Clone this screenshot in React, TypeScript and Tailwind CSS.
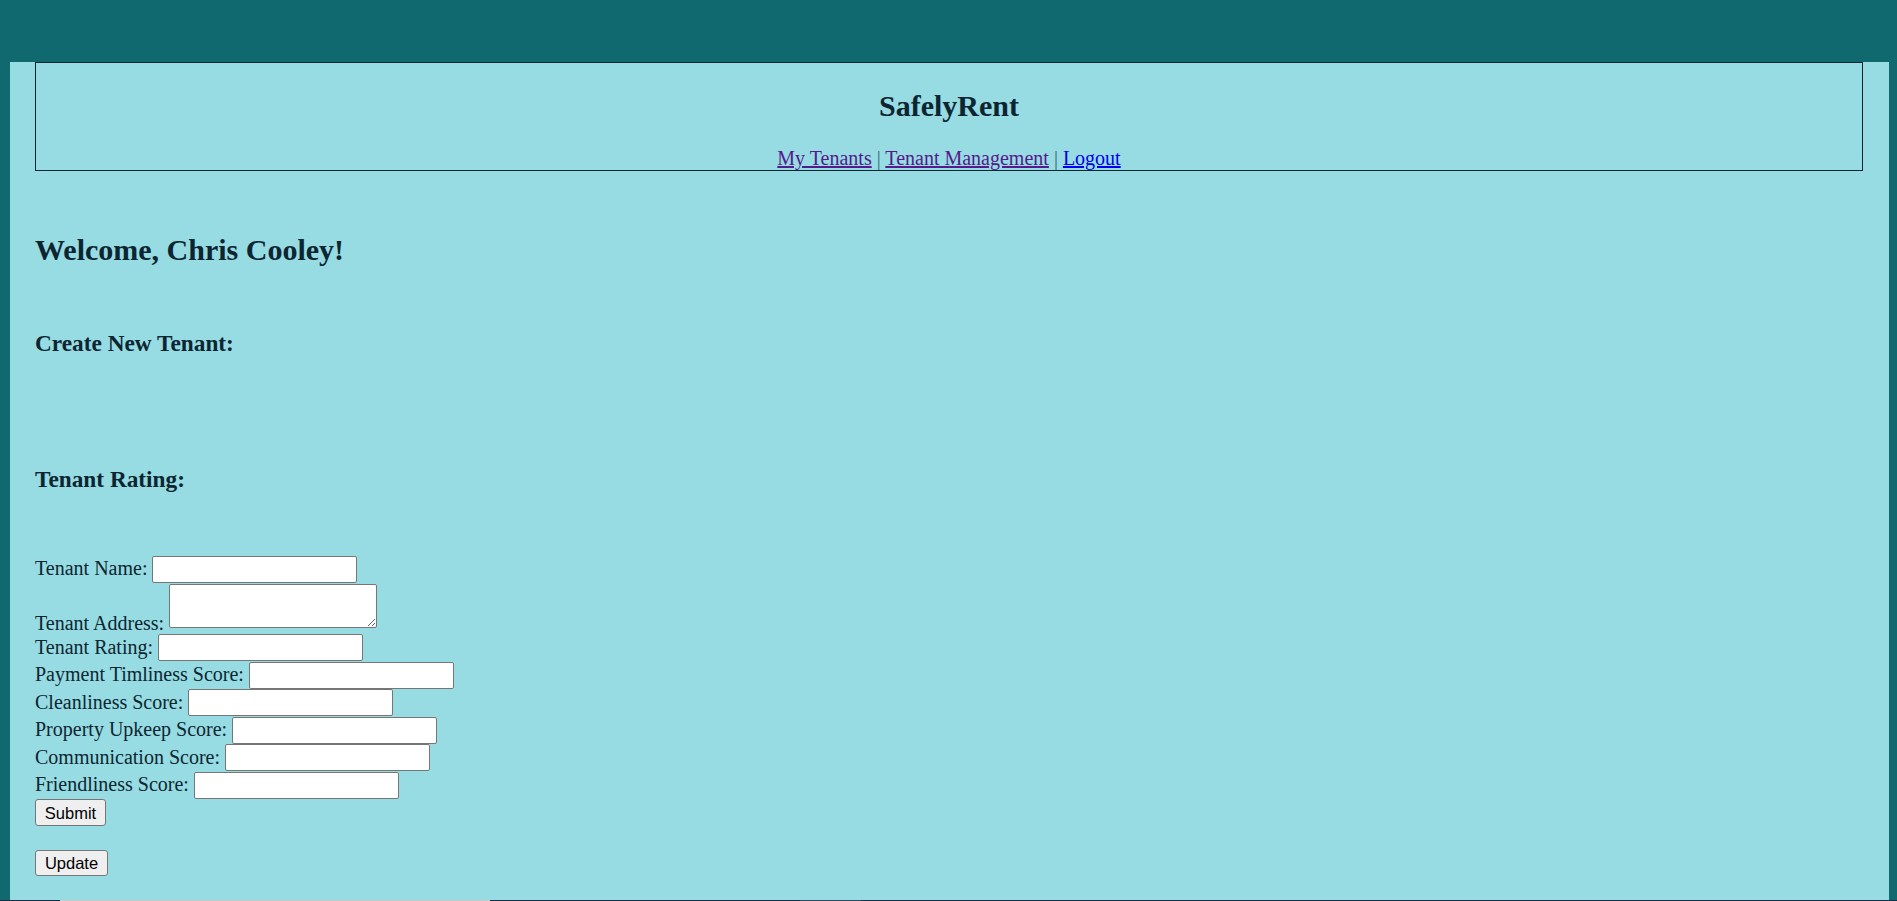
import React from 'react';

const fields = [
  'Tenant Rating:',
  'Payment Timliness Score:',
  'Cleanliness Score:',
  'Property Upkeep Score:',
  'Communication Score:',
  'Friendliness Score:',
];

function TextInput() {
  return (
    <input
      type="text"
      className="h-[27px] w-[205px] shrink-0 rounded-[2px] border border-[#767676] bg-white px-[3px] font-['Liberation_Sans',sans-serif] text-[16px] text-black outline-none"
    />
  );
}

function App() {
  return (
    <div className="min-h-screen bg-[#116970] pl-[10px] pr-[8px] pt-[62px] font-['Liberation_Serif','Times_New_Roman',serif] text-[20px] text-[#0c2631]">
      <div className="min-h-[900px] bg-[#97dbe3] pb-[40px] pl-[25px] pr-[26px]">
        {/* Header */}
        <header className="border border-[#0c2631] text-center">
          <h2 className="mb-[25px] mt-[26px] text-[30px] font-bold leading-[33px]">SafelyRent</h2>
          <nav className="leading-[23px]">
            <a href="#" className="text-[#551a8b] underline">My Tenants</a>
            <span className="text-[#3d6776]">{' | '}</span>
            <a href="#" className="text-[#551a8b] underline">Tenant Management</a>
            <span className="text-[#3d6776]">{' | '}</span>
            <a href="#" className="text-[#0000ee] underline">Logout</a>
          </nav>
        </header>

        <h2 className="mt-[62px] text-[30px] font-bold leading-[33px]">Welcome, Chris Cooley!</h2>

        <h3 className="mt-[64px] text-[23.3px] font-bold leading-[26px]">Create New Tenant:</h3>

        <h3 className="mt-[110px] text-[23.3px] font-bold leading-[26px]">Tenant Rating:</h3>

        <form className="mt-[64px]" onSubmit={(e) => e.preventDefault()}>
          <div className="flex h-[27.5px] items-start">
            <span className="mt-[1.3px] whitespace-pre leading-[22px]">Tenant Name: </span>
            <TextInput />
          </div>
          <div className="flex h-[50.9px] items-start">
            <span className="mt-[28.2px] whitespace-pre leading-[22px]">Tenant Address: </span>
            <textarea className="mt-[0.5px] h-[44px] w-[208px] shrink-0 resize rounded-[2px] border border-[#767676] bg-white font-['Liberation_Mono',monospace] text-[16px] outline-none" />
          </div>
          {fields.map((f) => (
            <div key={f} className="flex h-[27.5px] items-start">
              <span className="mt-[1.3px] whitespace-pre leading-[22px]">{f} </span>
              <TextInput />
            </div>
          ))}
          <button
            type="submit"
            className="block h-[27px] w-[71px] rounded-[3px] border border-[#767676] bg-[#efefef] font-['Liberation_Sans',sans-serif] text-[16.5px] leading-none text-black"
          >
            Submit
          </button>
        </form>

        <button
          type="button"
          className="mt-[23.5px] block h-[26px] w-[73px] rounded-[3px] border border-[#767676] bg-[#efefef] font-['Liberation_Sans',sans-serif] text-[16.5px] leading-none text-black"
        >
          Update
        </button>
      </div>

      {/* scrollbar edge at bottom of window */}
      <div className="fixed bottom-0 left-0 right-0 flex h-px">
        <div className="w-[60px] bg-[#1b2b4a]" />
        <div className="w-[430px] bg-[#c8c8c8]" />
        <div className="w-[310px] bg-[#1b2b4a]" />
        <div className="w-[61px] bg-[#2f4560]" />
        <div className="flex-1 bg-[#1b2b4a]" />
      </div>
    </div>
  );
}

export default App;
